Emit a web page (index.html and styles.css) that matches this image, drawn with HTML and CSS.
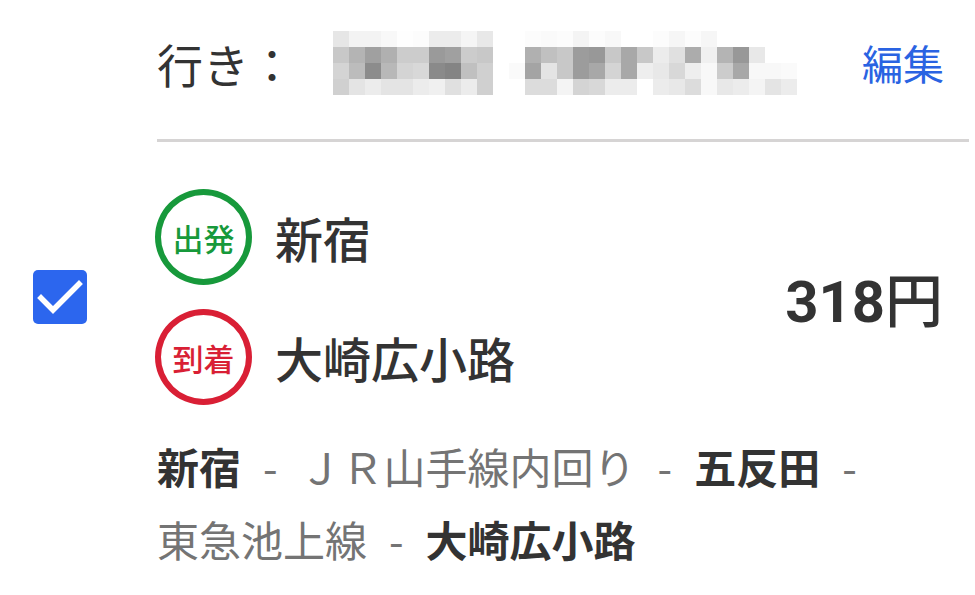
FILE: index.html
```html
<!DOCTYPE html>
<html lang="ja">
<head>
<meta charset="utf-8">
<title>経路</title>
<link rel="stylesheet" href="styles.css">
</head>
<body>
<div class="card">
  <div class="header">
    <span class="dest-label">行き：</span>
    <svg class="masked" width="465" height="64" viewBox="0 0 465 64" shape-rendering="crispEdges" aria-hidden="true">
      <!-- first word -->
      <g>
        <rect x="0" y="0" width="16" height="16" fill="#e6e6e6"/><rect x="16" y="0" width="16" height="16" fill="#f3f3f3"/><rect x="32" y="0" width="16" height="16" fill="#f3f3f3"/><rect x="48" y="0" width="16" height="16" fill="#f8f8f8"/><rect x="64" y="0" width="16" height="16" fill="#fefefe"/><rect x="80" y="0" width="16" height="16" fill="#fcfcfc"/><rect x="96" y="0" width="16" height="16" fill="#ececec"/><rect x="112" y="0" width="16" height="16" fill="#ececec"/><rect x="128" y="0" width="16" height="16" fill="#f5f5f5"/><rect x="144" y="0" width="16" height="16" fill="#e8e8e8"/>
        <rect x="0" y="16" width="16" height="16" fill="#c8c8c8"/><rect x="16" y="16" width="16" height="16" fill="#b4b4b4"/><rect x="32" y="16" width="16" height="16" fill="#a0a0a0"/><rect x="48" y="16" width="16" height="16" fill="#b0b0b0"/><rect x="64" y="16" width="16" height="16" fill="#cccccc"/><rect x="80" y="16" width="16" height="16" fill="#cccccc"/><rect x="96" y="16" width="16" height="16" fill="#9a9a9a"/><rect x="112" y="16" width="16" height="16" fill="#a0a0a0"/><rect x="128" y="16" width="16" height="16" fill="#cccccc"/><rect x="144" y="16" width="16" height="16" fill="#c8c8c8"/>
        <rect x="0" y="32" width="16" height="16" fill="#d4d4d4"/><rect x="16" y="32" width="16" height="16" fill="#bcbcbc"/><rect x="32" y="32" width="16" height="16" fill="#8c8c8c"/><rect x="48" y="32" width="16" height="16" fill="#b8b8b8"/><rect x="64" y="32" width="16" height="16" fill="#d4d4d4"/><rect x="80" y="32" width="16" height="16" fill="#d8d8d8"/><rect x="96" y="32" width="16" height="16" fill="#8a8a8a"/><rect x="112" y="32" width="16" height="16" fill="#848484"/><rect x="128" y="32" width="16" height="16" fill="#c0c0c0"/><rect x="144" y="32" width="16" height="16" fill="#d0d0d0"/>
        <rect x="0" y="48" width="16" height="16" fill="#d0d0d0"/><rect x="16" y="48" width="16" height="16" fill="#e4e4e4"/><rect x="32" y="48" width="16" height="16" fill="#ececec"/><rect x="48" y="48" width="16" height="16" fill="#e4e4e4"/><rect x="64" y="48" width="16" height="16" fill="#e4e4e4"/><rect x="80" y="48" width="16" height="16" fill="#ececec"/><rect x="96" y="48" width="16" height="16" fill="#f0f0f0"/><rect x="112" y="48" width="16" height="16" fill="#e0e0e0"/><rect x="128" y="48" width="16" height="16" fill="#ececec"/><rect x="144" y="48" width="16" height="16" fill="#d0d0d0"/>
      </g>
      <!-- second word -->
      <g transform="translate(176 0)">
        <rect x="0" y="0" width="16" height="16" fill="#ffffff"/><rect x="16" y="0" width="16" height="16" fill="#fcfcfc"/><rect x="32" y="0" width="16" height="16" fill="#fafafa"/><rect x="48" y="0" width="16" height="16" fill="#fcfcfc"/><rect x="64" y="0" width="16" height="16" fill="#f4f4f4"/><rect x="80" y="0" width="16" height="16" fill="#fcfcfc"/><rect x="96" y="0" width="16" height="16" fill="#f8f8f8"/><rect x="112" y="0" width="16" height="16" fill="#ffffff"/><rect x="128" y="0" width="16" height="16" fill="#ffffff"/><rect x="144" y="0" width="16" height="16" fill="#fcfcfc"/><rect x="160" y="0" width="16" height="16" fill="#f6f6f6"/><rect x="176" y="0" width="16" height="16" fill="#fcfcfc"/><rect x="192" y="0" width="16" height="16" fill="#f6f6f6"/>
        <rect x="0" y="16" width="16" height="16" fill="#ffffff"/><rect x="16" y="16" width="16" height="16" fill="#b0b0b0"/><rect x="32" y="16" width="16" height="16" fill="#c0c0c0"/><rect x="48" y="16" width="16" height="16" fill="#c8c8c8"/><rect x="64" y="16" width="16" height="16" fill="#9c9c9c"/><rect x="80" y="16" width="16" height="16" fill="#989898"/><rect x="96" y="16" width="16" height="16" fill="#c8c8c8"/><rect x="112" y="16" width="16" height="16" fill="#a8a8a8"/><rect x="128" y="16" width="16" height="16" fill="#c8c8c8"/><rect x="144" y="16" width="16" height="16" fill="#ececec"/><rect x="160" y="16" width="16" height="16" fill="#e0e0e0"/><rect x="176" y="16" width="16" height="16" fill="#acacac"/><rect x="192" y="16" width="16" height="16" fill="#f0f0f0"/><rect x="208" y="16" width="16" height="16" fill="#b4b4b4"/><rect x="224" y="16" width="16" height="16" fill="#989898"/><rect x="240" y="16" width="16" height="16" fill="#e8e8e8"/>
        <rect x="0" y="32" width="16" height="16" fill="#fafafa"/><rect x="16" y="32" width="16" height="16" fill="#a4a4a4"/><rect x="32" y="32" width="16" height="16" fill="#e4e4e4"/><rect x="48" y="32" width="16" height="16" fill="#c8c8c8"/><rect x="64" y="32" width="16" height="16" fill="#9c9c9c"/><rect x="80" y="32" width="16" height="16" fill="#a8a8a8"/><rect x="96" y="32" width="16" height="16" fill="#d4d4d4"/><rect x="112" y="32" width="16" height="16" fill="#a8a8a8"/><rect x="128" y="32" width="16" height="16" fill="#eeeeee"/><rect x="144" y="32" width="16" height="16" fill="#e8e8e8"/><rect x="160" y="32" width="16" height="16" fill="#d8d8d8"/><rect x="176" y="32" width="16" height="16" fill="#eeeeee"/><rect x="192" y="32" width="16" height="16" fill="#f8f8f8"/><rect x="208" y="32" width="16" height="16" fill="#cccccc"/><rect x="224" y="32" width="16" height="16" fill="#a8a8a8"/><rect x="240" y="32" width="16" height="16" fill="#f8f8f8"/><rect x="256" y="32" width="16" height="16" fill="#f8f8f8"/><rect x="272" y="32" width="16" height="16" fill="#fafafa"/>
        <rect x="0" y="48" width="16" height="16" fill="#ffffff"/><rect x="16" y="48" width="16" height="16" fill="#dcdcdc"/><rect x="32" y="48" width="16" height="16" fill="#dcdcdc"/><rect x="48" y="48" width="16" height="16" fill="#f4f4f4"/><rect x="64" y="48" width="16" height="16" fill="#d4d4d4"/><rect x="80" y="48" width="16" height="16" fill="#d8d8d8"/><rect x="96" y="48" width="16" height="16" fill="#ececec"/><rect x="112" y="48" width="16" height="16" fill="#ececec"/><rect x="128" y="48" width="16" height="16" fill="#ffffff"/><rect x="144" y="48" width="16" height="16" fill="#ececec"/><rect x="160" y="48" width="16" height="16" fill="#e8e8e8"/><rect x="176" y="48" width="16" height="16" fill="#dcdcdc"/><rect x="192" y="48" width="16" height="16" fill="#f8f8f8"/><rect x="208" y="48" width="16" height="16" fill="#e8e8e8"/><rect x="224" y="48" width="16" height="16" fill="#ececec"/><rect x="240" y="48" width="16" height="16" fill="#f4f4f4"/><rect x="256" y="48" width="16" height="16" fill="#e4e4e4"/><rect x="272" y="48" width="16" height="16" fill="#ececec"/>
      </g>
    </svg>
    <a class="edit" href="#">編集</a>
  </div>

  <div class="trip">
    <span class="checkbox" role="checkbox" aria-checked="true">
      <svg width="54" height="54" viewBox="0 0 54 54" aria-hidden="true">
        <path d="M8 28 L20 40 L46 14" fill="none" stroke="#fff" stroke-width="5.5" stroke-linecap="square"/>
      </svg>
    </span>
    <div class="stops">
      <div class="stop">
        <span class="badge badge-dep">出発</span>
        <span class="stop-name">新宿</span>
      </div>
      <div class="stop">
        <span class="badge badge-arr">到着</span>
        <span class="stop-name">大崎広小路</span>
      </div>
    </div>
    <div class="fare"><span class="fare-num">318</span><span class="fare-unit">円</span></div>
  </div>

  <p class="route">
    <span class="seg st">新宿</span><span class="sep">-</span><span class="seg ln">ＪＲ山手線内回り</span><span class="sep">-</span><span class="seg st">五反田</span><span class="sep">-</span><span class="seg ln">東急池上線</span><span class="sep">-</span><span class="seg st">大崎広小路</span>
  </p>
</div>
</body>
</html>
```

FILE: styles.css
```css
html, body {
  margin: 0;
  padding: 0;
  background: #fff;
}

body {
  width: 975px;
  height: 595px;
  overflow: hidden;
  font-family: "Noto Sans CJK JP", "Noto Sans", sans-serif;
  color: #333;
}

.header {
  display: flex;
  align-items: center;
  height: 142px;
  box-sizing: border-box;
  margin-left: 157px;
  margin-right: 6px;
  padding-bottom: 14px;
  border-bottom: 3px solid #d6d4d4;
}

.dest-label {
  font-size: 46px;
  line-height: 1;
  color: #333;
  width: 176px;
  flex: none;
}

.masked {
  display: block;
  flex: none;
}

.edit {
  margin-left: auto;
  margin-right: 25px;
  font-size: 41px;
  line-height: 1;
  color: #2a63e2;
  text-decoration: none;
}

.trip {
  display: flex;
  align-items: center;
  margin-top: 47px;
}

.checkbox {
  flex: none;
  display: block;
  width: 54px;
  height: 54px;
  margin-left: 33px;
  border-radius: 5px;
  background: #2c66ee;
}

.checkbox svg {
  display: block;
}

.stops {
  display: flex;
  flex-direction: column;
  gap: 24px;
  margin-left: 68px;
}

.stop {
  display: flex;
  align-items: center;
}

.badge {
  flex: none;
  box-sizing: border-box;
  width: 97px;
  height: 96px;
  border-radius: 50%;
  border: 6px solid;
  display: flex;
  align-items: center;
  justify-content: center;
  font-size: 31px;
  font-weight: 500;
}

.badge-dep {
  color: #17993b;
  border-color: #17993b;
}

.badge-arr {
  color: #d91f35;
  border-color: #d91f35;
}

.stop-name {
  margin-left: 23px;
  font-size: 48px;
  font-weight: 500;
  line-height: 1;
  color: #333;
}

.fare {
  margin-left: auto;
  margin-right: 32px;
  margin-top: 4px;
  font-size: 58px;
  line-height: 1;
  color: #333;
}

.fare-num {
  font-family: Roboto, "Noto Sans", sans-serif;
  font-weight: 700;
}

.fare-unit {
  font-weight: 500;
}

.route {
  margin: 24px 30px 0 157px;
  font-size: 42px;
  line-height: 73px;
}

.seg {
  white-space: nowrap;
}

.st {
  font-weight: 700;
  color: #333;
}

.ln {
  color: #747474;
}

.sep {
  display: inline-block;
  margin: 0 22px;
  color: #747474;
}
```
